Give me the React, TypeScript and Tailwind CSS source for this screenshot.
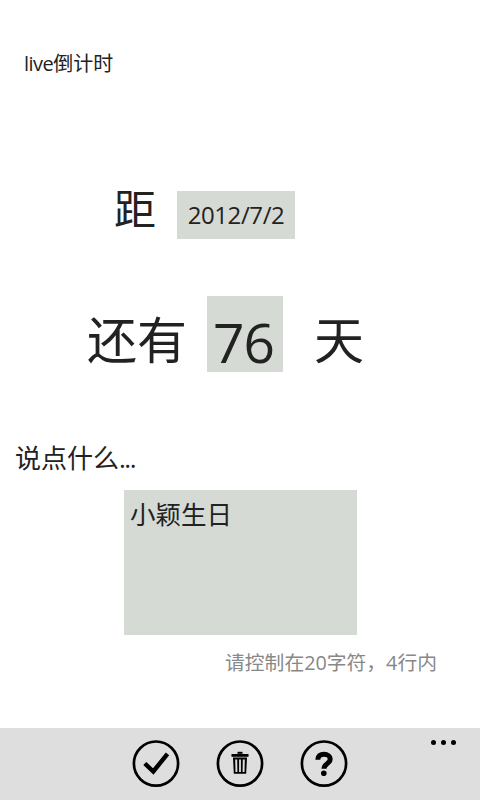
const font = "font-['Open_Sans','Noto_Sans_CJK_SC',sans-serif]";

function Ring({ children }: { children: React.ReactNode }) {
  return (
    <svg viewBox="0 0 48 48" className="w-12 h-12" fill="none" stroke="#000" strokeWidth="2.7">
      <circle cx="24" cy="23.6" r="22.1" />
      {children}
    </svg>
  );
}

export default function App() {
  return (
    <div className={`${font} relative flex flex-col w-[480px] h-[800px] bg-white text-[#222]`}>
      <div className="pl-6 pt-[50px] h-[191px] text-[20px] leading-[28px]"><span className="tracking-[-0.5px]">live</span>倒计时</div>

      <div className="flex h-[48px] pl-[114px]">
        <span className="text-[42px] leading-[36px] w-[63px]">距</span>
        <div className="w-[118px] h-12 bg-[#d6dad5] flex items-center justify-center text-[24px] tracking-[-0.4px]">2012/7/2</div>
      </div>

      <div className="flex mt-[57px] h-[76px] pl-[87px]">
        <span className="text-[50px] leading-[88px] w-[120px]">还有</span>
        <div className="w-[76px] h-[76px] bg-[#d6dad5] flex justify-center pr-[3px] text-[55px] leading-[92px] tracking-[-1px]">76</div>
        <span className="text-[50px] leading-[88px] ml-[31px]">天</span>
      </div>

      <div className="mt-[68px] pl-[15px] text-[26px] leading-[36px]">说点什么<span className="tracking-[-1.5px]">...</span></div>

      <div className="ml-[124px] mt-[14px] w-[233px] h-[145px] bg-[#d6dad5] pl-[6px] pt-[6px] text-[25.5px] leading-[36px]">小颖生日</div>

      <div className="mt-[14px] pr-[43px] text-right text-[19.8px] leading-[28px] text-[#888]">{"请控制在20字符\uFF0C4行内"}</div>

      <div className="absolute left-0 bottom-0 w-full h-[72px] bg-[#dedede] flex justify-center gap-9 pt-[12px]">
        <Ring>
          <path d="M12.8 23.5 L21.3 31.5 L35.5 13.8" strokeWidth="4.4" />
        </Ring>
        <Ring>
          <g stroke="none" fill="#000">
            <rect x="21.5" y="11.8" width="5" height="2" />
            <rect x="15.5" y="14" width="17" height="2.8" />
            <path fillRule="evenodd" d="M17 17.6 H31 L30.2 33.8 H17.8 Z M19.2 19.6 L19.5 32 H21.4 L21.2 19.6 Z M23.1 19.6 V32 H24.9 V19.6 Z M26.8 19.6 L26.6 32 H28.5 L28.8 19.6 Z" />
          </g>
        </Ring>
        <Ring>
          <path d="M17.8 19.8 C17.8 15.8 20.5 14.3 24 14.3 C27.7 14.3 30.2 16.3 30.2 19 C30.2 23.8 24 23.5 24 28.8" strokeWidth="5" />
          <circle cx="23.8" cy="33.2" r="2.8" fill="#000" stroke="none" />
        </Ring>
        <div className="absolute left-[431px] top-[12px] flex gap-[5px]">
          <span className="w-[5px] h-[5px] rounded-full bg-black" />
          <span className="w-[5px] h-[5px] rounded-full bg-black" />
          <span className="w-[5px] h-[5px] rounded-full bg-black" />
        </div>
      </div>
    </div>
  );
}
